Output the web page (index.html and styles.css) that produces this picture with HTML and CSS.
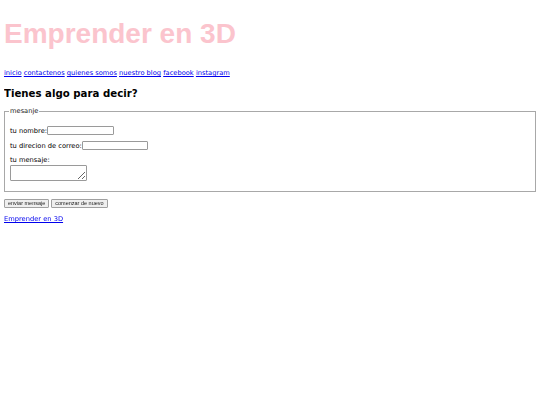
FILE: index.html
```html
<!DOCTYPE html>
<html lang="es">
<head>
<meta charset="utf-8">
<title>Emprender en 3D</title>
<link rel="stylesheet" href="styles.css">
</head>
<body>
<h1 class="title">Emprender en 3D</h1>
<nav class="nav">
  <a href="#">inicio</a>
  <a href="#">contactenos</a>
  <a href="#">quienes somos</a>
  <a href="#">nuestro blog</a>
  <a href="#">facebook</a>
  <a href="#">instagram</a>
</nav>
<h2 class="heading">Tienes algo para decir?</h2>
<form class="form">
  <fieldset class="box">
    <legend class="legend">mesanje</legend>
    <div class="row row-first"><label class="label">tu nombre:</label><input class="field field-name" type="text"></div>
    <div class="row"><label class="label">tu direcion de correo:</label><input class="field field-mail" type="text"></div>
    <div class="row row-msg"><label class="label">tu mensaje:</label><textarea class="area"></textarea></div>
  </fieldset>
  <div class="buttons">
    <button class="btn" type="button">enviar mensaje</button>
    <button class="btn" type="button">comenzar de nuevo</button>
  </div>
</form>
<p class="footer"><a href="#">Emprender en 3D</a></p>
</body>
</html>
```

FILE: styles.css
```css
html, body {
  background: #ffffff;
}
body {
  margin: 0 4px;
  font-family: "DejaVu Sans", Verdana, sans-serif;
  font-size: 6.7px;
  color: #000;
  -webkit-font-smoothing: antialiased;
}
a {
  color: #0000ee;
}
.title {
  margin: 0;
  padding-top: 18px;
  font-family: "Liberation Sans", Arial, sans-serif;
  font-weight: bold;
  font-size: 28px;
  line-height: 32px;
  color: #fbc4cd;
}
.nav {
  margin-top: 19px;
  line-height: 8px;
  font-size: 6.7px;
}
.heading {
  margin: 11px 0 0;
  font-size: 10.2px;
  line-height: 12px;
  font-weight: bold;
}
.form {
  margin-top: 7px;
}
.box {
  margin: 0;
  padding: 1px 5px 10px;
  border: 1px solid #a8a8a8;
  display: flex;
  flex-direction: column;
  gap: 6px;
}
.legend {
  padding: 0 1px;
  margin-left: -1px;
  font-size: 6.7px;
  line-height: 8px;
  color: #222;
}
.row {
  display: flex;
  align-items: center;
  height: 9px;
}
.row-first {
  margin-top: 10px;
}
.label {
  line-height: 8px;
  color: #000;
}
.field {
  box-sizing: border-box;
  height: 9px;
  padding: 0;
  margin: 0;
  border: 1px solid #9a9a9a;
  border-radius: 1px;
  background: #fff;
}
.field-name {
  width: 67px;
}
.field-mail {
  width: 66px;
}
.row-msg {
  height: auto;
  flex-direction: column;
  align-items: flex-start;
  gap: 1px;
}
.area {
  box-sizing: border-box;
  width: 77px;
  height: 16px;
  margin: 0;
  padding: 0;
  border: 1px solid #9a9a9a;
  border-radius: 1px;
  resize: both;
}
.buttons {
  display: flex;
  gap: 2px;
  margin-top: 7px;
}
.btn {
  box-sizing: border-box;
  height: 9px;
  margin: 0;
  padding: 0 3px;
  white-space: nowrap;
  font-family: "Liberation Sans", Arial, sans-serif;
  font-size: 5.5px;
  line-height: 7px;
  color: #222;
  background: #efefef;
  border: 1px solid #a0a0a0;
  border-radius: 1px;
}
.footer {
  margin: 7px 0 0;
  font-size: 6.7px;
  line-height: 8px;
}
```
